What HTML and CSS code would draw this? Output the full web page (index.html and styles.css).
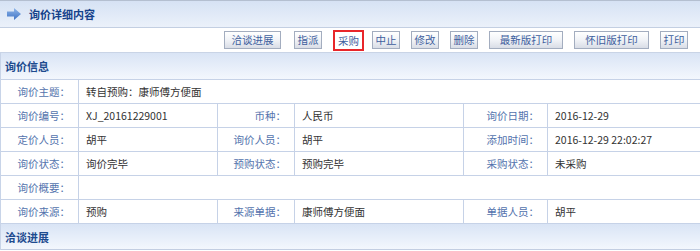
FILE: index.html
```html
<!DOCTYPE html>
<html lang="zh-CN">
<head>
<meta charset="utf-8">
<title>询价详细内容</title>
<link rel="stylesheet" href="styles.css">
</head>
<body>
<div class="page">
  <div class="titlebar">
    <svg class="arrow" width="14" height="12" viewBox="0 0 14 12">
      <defs>
        <linearGradient id="ag" x1="0" y1="0" x2="0" y2="1">
          <stop offset="0" stop-color="#8fb6ea"/>
          <stop offset="1" stop-color="#3f73c4"/>
        </linearGradient>
      </defs>
      <path d="M0 3.5 H7 V0 L14 6 L7 12 V8.5 H0 Z" fill="url(#ag)"/>
    </svg>
    <span class="title">询价详细内容</span>
  </div>
  <div class="toolbar">
    <button class="btn w57">洽谈进展</button>
    <button class="btn">指派</button>
    <button class="btn hot">采购</button>
    <button class="btn">中止</button>
    <button class="btn">修改</button>
    <button class="btn">删除</button>
    <button class="btn w74">最新版打印</button>
    <button class="btn w75">怀旧版打印</button>
    <button class="btn">打印</button>
  </div>
  <div class="section">
    <div class="sec-head">询价信息</div>
    <table class="info">
      <colgroup>
        <col class="c1"><col class="c2"><col class="c3"><col class="c4"><col class="c5"><col class="c6">
      </colgroup>
      <tr>
        <td class="lbl">询价主题：</td>
        <td class="val" colspan="5">转自预购：康师傅方便面</td>
      </tr>
      <tr>
        <td class="lbl">询价编号：</td>
        <td class="val">XJ_20161229001</td>
        <td class="lbl">币种：</td>
        <td class="val">人民币</td>
        <td class="lbl">询价日期：</td>
        <td class="val">2016-12-29</td>
      </tr>
      <tr>
        <td class="lbl">定价人员：</td>
        <td class="val">胡平</td>
        <td class="lbl">询价人员：</td>
        <td class="val">胡平</td>
        <td class="lbl">添加时间：</td>
        <td class="val">2016-12-29 22:02:27</td>
      </tr>
      <tr>
        <td class="lbl">询价状态：</td>
        <td class="val">询价完毕</td>
        <td class="lbl">预购状态：</td>
        <td class="val">预购完毕</td>
        <td class="lbl">采购状态：</td>
        <td class="val">未采购</td>
      </tr>
      <tr>
        <td class="lbl">询价概要：</td>
        <td class="val" colspan="5"></td>
      </tr>
      <tr>
        <td class="lbl">询价来源：</td>
        <td class="val">预购</td>
        <td class="lbl">来源单据：</td>
        <td class="val">康师傅方便面</td>
        <td class="lbl">单据人员：</td>
        <td class="val">胡平</td>
      </tr>
    </table>
    <div class="sec-head last">洽谈进展</div>
  </div>
</div>
</body>
</html>
```

FILE: styles.css
```css
html, body {
  margin: 0;
  padding: 0;
  background: #ffffff;
}
body {
  font-family: "Noto Sans CJK SC", "Noto Sans", sans-serif;
  font-size: 10.5px;
  color: #333333;
}
.page {
  width: 700px;
}
.titlebar {
  height: 26px;
  border-top: 1px solid #b4bfd0;
  border-bottom: 1px solid #c3cfe2;
  background: linear-gradient(#d6e2f4, #ebf1fa);
  display: flex;
  align-items: center;
  padding-left: 7px;
  box-sizing: content-box;
}
.arrow {
  display: block;
  margin-right: 8px;
}
.title {
  font-weight: bold;
  font-size: 11px;
  color: #15428b;
  line-height: 1;
}
.toolbar {
  height: 24px;
  border-bottom: 1px solid #c9d4e6;
  display: flex;
  align-items: center;
  justify-content: flex-end;
  padding-right: 12px;
  gap: 11px;
  background: #ffffff;
}
.btn {
  height: 18px;
  width: 28px;
  padding: 0;
  margin: 0;
  box-sizing: border-box;
  border: 1px solid #a3adbf;
  background: linear-gradient(#ffffff, #f1f3f7 50%, #d9dde6);
  font-family: "Noto Sans CJK SC", "Noto Sans", sans-serif;
  font-size: 10.5px;
  color: #3f5f9e;
  line-height: 16px;
  text-align: center;
  white-space: nowrap;
}
.btn.w57 { width: 57px; margin-right: 2px; }
.btn.w74 { width: 74px; }
.btn.w75 { width: 75px; }
.btn.hot {
  width: 31px;
  height: 21px;
  border: 2px solid #e8262a;
  background: #ffffff;
  line-height: 17px;
  margin-right: -3px;
}
.section {
  border-left: 1px solid #c8d4e8;
}
.sec-head {
  height: 26px;
  background: linear-gradient(#d9e4f5, #f3f7fd);
  font-weight: bold;
  font-size: 11px;
  color: #1d4b8f;
  display: flex;
  align-items: center;
  padding-left: 4px;
}
.sec-head.last {
  height: 25px;
  border-bottom: 1px solid #c3cee2;
}
.info {
  width: 699px;
  table-layout: fixed;
  border-collapse: separate;
  border-spacing: 0;
  border-top: 1px solid #c6d2e7;
}
.c1 { width: 78px; }
.c2 { width: 139px; }
.c3 { width: 77px; }
.c4 { width: 169px; }
.c5 { width: 84px; }
.c6 { width: 152px; }
.info td {
  height: 23px;
  padding: 0;
  border-right: 1px solid #c6d2e7;
  border-bottom: 1px solid #c6d2e7;
  white-space: nowrap;
  overflow: hidden;
  line-height: 23px;
}
.info td:last-child {
  border-right: none;
}
.lbl {
  text-align: right;
  padding-right: 8px !important;
  color: #5373ad;
}
.val {
  text-align: left;
  padding-left: 7px !important;
  color: #333333;
}
```
